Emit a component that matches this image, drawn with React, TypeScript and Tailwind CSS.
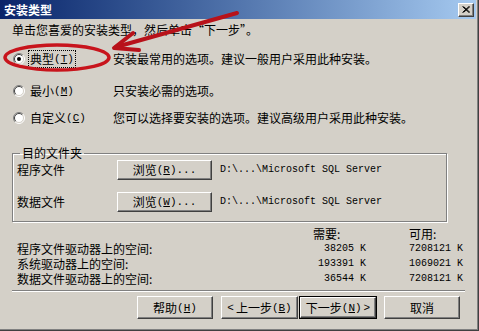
import React from "react"

const cjk = "font-['Noto_Sans_CJK_SC',sans-serif]"
const mono = "font-['Liberation_Mono',monospace]"

function Radio({ checked }: { checked?: boolean }) {
  return (
    <svg width="12" height="12" viewBox="0 0 12 12" className="shrink-0">
      <circle cx="6" cy="6" r="5" fill="#fff" />
      <path d="M2.1 9.9 A5.5 5.5 0 0 1 9.9 2.1" stroke="#808080" fill="none" />
      <path d="M9.9 2.1 A5.5 5.5 0 0 1 2.1 9.9" stroke="#fff" fill="none" />
      <path d="M2.8 9.2 A4.5 4.5 0 0 1 9.2 2.8" stroke="#404040" fill="none" />
      <path d="M9.2 2.8 A4.5 4.5 0 0 1 2.8 9.2" stroke="#d4d0c8" fill="none" />
      {checked && <circle cx="6" cy="6" r="2" fill="#000" />}
    </svg>
  )
}

function Btn({ className, children }: { className: string; children: React.ReactNode }) {
  return (
    <div
      className={
        "flex items-center justify-center border border-t-white border-l-white border-r-[#404040] border-b-[#404040] bg-[#d4d0c8] shadow-[inset_-1px_-1px_0_#808080] text-[12px] leading-[14px] text-black " +
        className
      }
    >
      {children}
    </div>
  )
}

function Key({ k }: { k: string }) {
  return (
    <span className={mono + " text-[11px]"}>
      (<span className="underline">{k}</span>)
    </span>
  )
}

const options = [
  { label: "典型", key: "T", desc: "安装最常用的选项。建议一般用户采用此种安装。", checked: true, mt: "mt-[12px]" },
  { label: "最小", key: "M", desc: "只安装必需的选项。", checked: false, mt: "mt-[12px]" },
  { label: "自定义", key: "C", desc: "您可以选择要安装的选项。建议高级用户采用此种安装。", checked: false, mt: "mt-[7px]" },
]

const space = [
  { name: "程序文件驱动器上的空间:", need: "38205 K", free: "7208121 K" },
  { name: "系统驱动器上的空间:", need: "193391 K", free: "1069021 K" },
  { name: "数据文件驱动器上的空间:", need: "36544 K", free: "7208121 K" },
]

export default function App() {
  return (
    <div className={"relative w-[479px] h-[331px] overflow-hidden bg-[#d4d0c8] text-black border-r border-b border-[#404040] " + cjk}>
      <div className="flex flex-col h-full border-r border-b border-[#808080]">
        {/* title bar */}
        <div className="h-[19px] mr-[1px] flex items-center justify-between pl-[4px] pr-[2px] bg-gradient-to-r from-[#0a246a] to-[#a6caf0]">
          <span className="text-white text-[12px] leading-[14px] font-bold">安装类型</span>
          <div className="w-[16px] h-[14px] flex items-center justify-center bg-[#d4d0c8] border border-t-white border-l-white border-r-[#404040] border-b-[#404040] shadow-[inset_-1px_-1px_0_#808080]">
            <svg width="8" height="7" viewBox="0 0 8 7">
              <path d="M0.5 0.5 L7 6.5 M1.5 0.5 L8 6.5 M7 0.5 L0.5 6.5 M8 0.5 L1.5 6.5" stroke="#000" strokeWidth="1" />
            </svg>
          </div>
        </div>

        <div className="flex flex-col px-[12px]">
          <div className="mt-[4px] text-[12px] leading-[14px]">单击您喜爱的安装类型，然后单击“下一步”。</div>

          {options.map((o) => (
            <div key={o.key} className={"flex items-center h-[20px] " + o.mt}>
              <div className="w-[101px] flex items-center">
                <div className="ml-[1px]">
                  <Radio checked={o.checked} />
                </div>
                <div
                  className={
                    "ml-[3px] px-[1px] h-[18px] flex items-center text-[12px] leading-[14px] " +
                    (o.checked ? "border border-dotted border-black" : "border border-transparent")
                  }
                >
                  {o.label} <Key k={o.key} />
                </div>
              </div>
              <div className="text-[12px] leading-[14px]">{o.desc}</div>
            </div>
          ))}

          {/* destination folder group */}
          <fieldset className="mt-[18px] w-[435px] px-[4px] pb-[9px] border border-[#808080] shadow-[1px_1px_0_#fff,inset_1px_1px_0_#fff]">
            <legend className="ml-[3px] px-[2px] text-[12px] leading-[14px]">目的文件夹</legend>
            {[
              { name: "程序文件", key: "R", mt: "" },
              { name: "数据文件", key: "W", mt: "mt-[12px]" },
            ].map((r) => (
              <div key={r.key} className={"flex items-center h-[20px] " + r.mt}>
                <div className="w-[100px] text-[12px] leading-[14px]">{r.name}</div>
                <Btn className="w-[95px] h-[20px]">
                  浏览 <Key k={r.key} />
                  <span className={mono + " text-[11px]"}>...</span>
                </Btn>
                <div className={"ml-[8px] text-[10px] leading-[12px] " + mono}>D:\...\Microsoft SQL Server</div>
              </div>
            ))}
          </fieldset>

          {/* space */}
          <div className="mt-[4px] pl-[5px] grid grid-cols-[296px_53px_43px_54px] text-[12px] leading-[15px]">
            <div />
            <div>需要:</div>
            <div />
            <div>可用:</div>
            {space.map((s) => (
              <React.Fragment key={s.name}>
                <div>{s.name}</div>
                <div className={"text-right text-[10px] " + mono}>{s.need}</div>
                <div />
                <div className={"text-right text-[10px] " + mono}>{s.free}</div>
              </React.Fragment>
            ))}
          </div>

          <div className="mt-[4px] h-[2px] border-t border-t-[#808080] border-b border-b-white" />
        </div>

        {/* buttons */}
        <div className="mt-[4px] pl-[137px] flex">
          <Btn className="w-[76px] h-[23px]">
            帮助 <Key k="H" />
          </Btn>
          <Btn className="ml-[8px] w-[77px] h-[23px]">
            <span className={mono + " text-[11px] mr-[2px]"}>&lt;</span>上一步 <Key k="B" />
          </Btn>
          <div className="ml-[1px] border border-black">
            <Btn className="w-[76px] h-[21px]">
              下一步 <Key k="N" />
              <span className={mono + " text-[11px] ml-[2px]"}>&gt;</span>
            </Btn>
          </div>
          <Btn className="ml-[7px] w-[76px] h-[23px]">取消</Btn>
        </div>
      </div>

      {/* red annotation drawn over the dialog */}
      <svg className="absolute inset-0 pointer-events-none" width="479" height="331" viewBox="0 0 479 331">
        <ellipse cx="57" cy="57.5" rx="52" ry="12.5" fill="none" stroke="#c8141c" strokeWidth="3.5" />
        <path d="M237 13 L116 47" stroke="#b8121a" strokeWidth="4" strokeLinecap="round" fill="none" />
        <path d="M133 33 L114 48 L139 50" stroke="#b8121a" strokeWidth="4" strokeLinecap="round" strokeLinejoin="round" fill="none" />
      </svg>
    </div>
  )
}
